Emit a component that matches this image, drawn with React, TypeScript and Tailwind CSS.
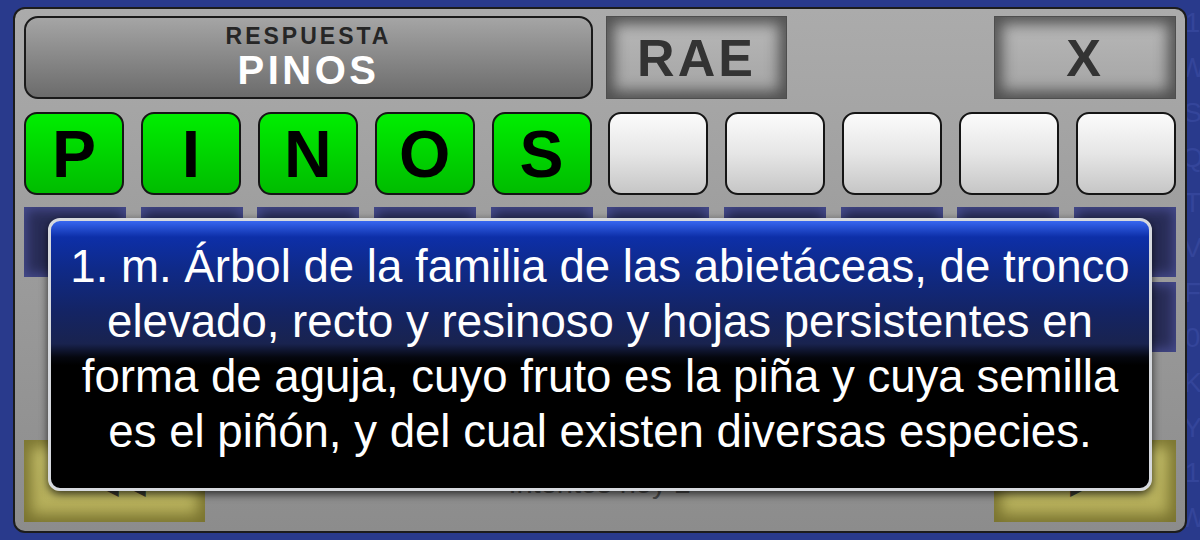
const BG_CHARS = "6LQ8M1GU02RTXAWEIKNZVPBSCDYHOF".split("");

const letters = ["P", "I", "N", "O", "S", "", "", "", "", ""];

function BevelButton({ label, className = "" }: { label: string; className?: string }) {
  return (
    <div
      className={
        "flex h-full items-center justify-center border border-[#4e4e4e] bg-gradient-to-b from-[#b8b8b8] to-[#a4a4a4] shadow-[inset_0_0_14px_7px_rgba(66,66,66,0.85)] " +
        className
      }
    >
      <span className="text-[52px] font-bold leading-none tracking-[3px] text-[#333333]">{label}</span>
    </div>
  );
}

function OliveButton({ children, className = "" }: { children?: React.ReactNode; className?: string }) {
  return (
    <div
      className={
        "flex h-full items-end justify-center pb-[24px] bg-gradient-to-b from-[#c2bc68] to-[#b3ac58] shadow-[inset_0_0_14px_7px_rgba(110,104,40,0.85)] " +
        className
      }
    >
      {children}
    </div>
  );
}

function Tile({ letter }: { letter: string }) {
  const green = letter !== "";
  return (
    <div
      className={
        "flex h-[83px] w-[100px] items-center justify-center rounded-[13px] border-2 border-[#151515] " +
        (green
          ? "bg-gradient-to-b from-[#00ee00] to-[#00bc00]"
          : "bg-gradient-to-b from-[#fbfbfb] via-[#e6e6e6] to-[#c6c6c6]")
      }
    >
      <span className="text-[66px] font-bold leading-none text-black">{letter}</span>
    </div>
  );
}

function KeyTile() {
  return (
    <div className="h-full w-[102px] bg-[#282c56] shadow-[inset_0_0_12px_3px_rgba(80,86,160,0.75)]" />
  );
}

export default function App() {
  return (
    <div
      className="relative h-[540px] w-[1200px] overflow-hidden bg-[#293a8c]"
      style={{ fontFamily: '"Liberation Sans", Arial, sans-serif' }}
    >
      {/* faint letters in the background */}
      <div className="absolute inset-0 grid grid-cols-[repeat(27,45px)] auto-rows-[45px] text-[28px] leading-[45px] text-[#34459a]">
        {Array.from({ length: 27 * 12 }).map((_, i) => (
          <span key={i} className="text-center">
            {BG_CHARS[(i * 7 + 3) % BG_CHARS.length]}
          </span>
        ))}
      </div>

      <div className="relative ml-[13px] mt-[7px] flex h-[526px] w-[1174px] flex-col rounded-[12px] border-2 border-[#1c1c1c] bg-gradient-to-b from-[#ababab] to-[#8c8c8c] px-[9px] pt-[7px]">
        {/* top row */}
        <div className="flex h-[83px]">
          <div className="flex w-[569px] flex-col items-center rounded-[14px] border-2 border-[#1a1a1a] bg-gradient-to-b from-[#a5a5a5] to-[#6c6c6c] pt-[6px]">
            <span className="text-[23px] font-bold leading-[24px] tracking-[3px] text-[#262626]">RESPUESTA</span>
            <span className="text-[40px] font-bold leading-[44px] tracking-[3.5px] text-white">PINOS</span>
          </div>
          <BevelButton label="RAE" className="ml-[13px] w-[181px]" />
          <BevelButton label="X" className="ml-auto w-[182px]" />
        </div>

        {/* answer tiles */}
        <div className="mt-[13px] flex justify-between">
          {letters.map((l, i) => (
            <Tile key={i} letter={l} />
          ))}
        </div>

        {/* keyboard rows (under the popup) */}
        <div className="mt-[12px] flex h-[70px] justify-between">
          {Array.from({ length: 10 }).map((_, i) => (
            <KeyTile key={i} />
          ))}
        </div>
        <div className="mt-[5px] flex h-[70px] justify-end gap-[15px]">
          {Array.from({ length: 9 }).map((_, i) => (
            <KeyTile key={i} />
          ))}
        </div>

        {/* bottom row */}
        <div className="mt-[88px] flex h-[82px]">
          <OliveButton className="w-[181px]">
            <span className="text-[40px] leading-none tracking-[-4px] text-[#3a3a30]">◀◀</span>
          </OliveButton>
          <div className="flex flex-1 justify-center pt-[29px]">
            <span className="text-[29px] leading-none text-[#4a4a4a]">Intentos hoy 2</span>
          </div>
          <OliveButton className="w-[182px]">
            <span className="text-[40px] leading-none text-[#3a3a30]">▶</span>
          </OliveButton>
        </div>
      </div>

      {/* definition popup */}
      <div className="absolute left-[48px] top-[218px] h-[273px] w-[1104px] rounded-[12px] border-[3px] border-[#d6d9de] bg-[linear-gradient(to_bottom,#3767f0_0%,#0d2fa8_6%,#0f2a88_18%,#142464_34%,#19234f_46%,#05070f_51%,#000000_54%,#000000_100%)] px-[6px] pt-[18px] text-center shadow-[0_3px_8px_rgba(0,0,0,0.7)]">
        <p className="text-[45.6px] leading-[55px] text-white">
          1. m. Árbol de la familia de las abietáceas, de tronco
          <br />
          elevado, recto y resinoso y hojas persistentes en
          <br />
          forma de aguja, cuyo fruto es la piña y cuya semilla
          <br />
          es el piñón, y del cual existen diversas especies.
        </p>
      </div>
    </div>
  );
}
